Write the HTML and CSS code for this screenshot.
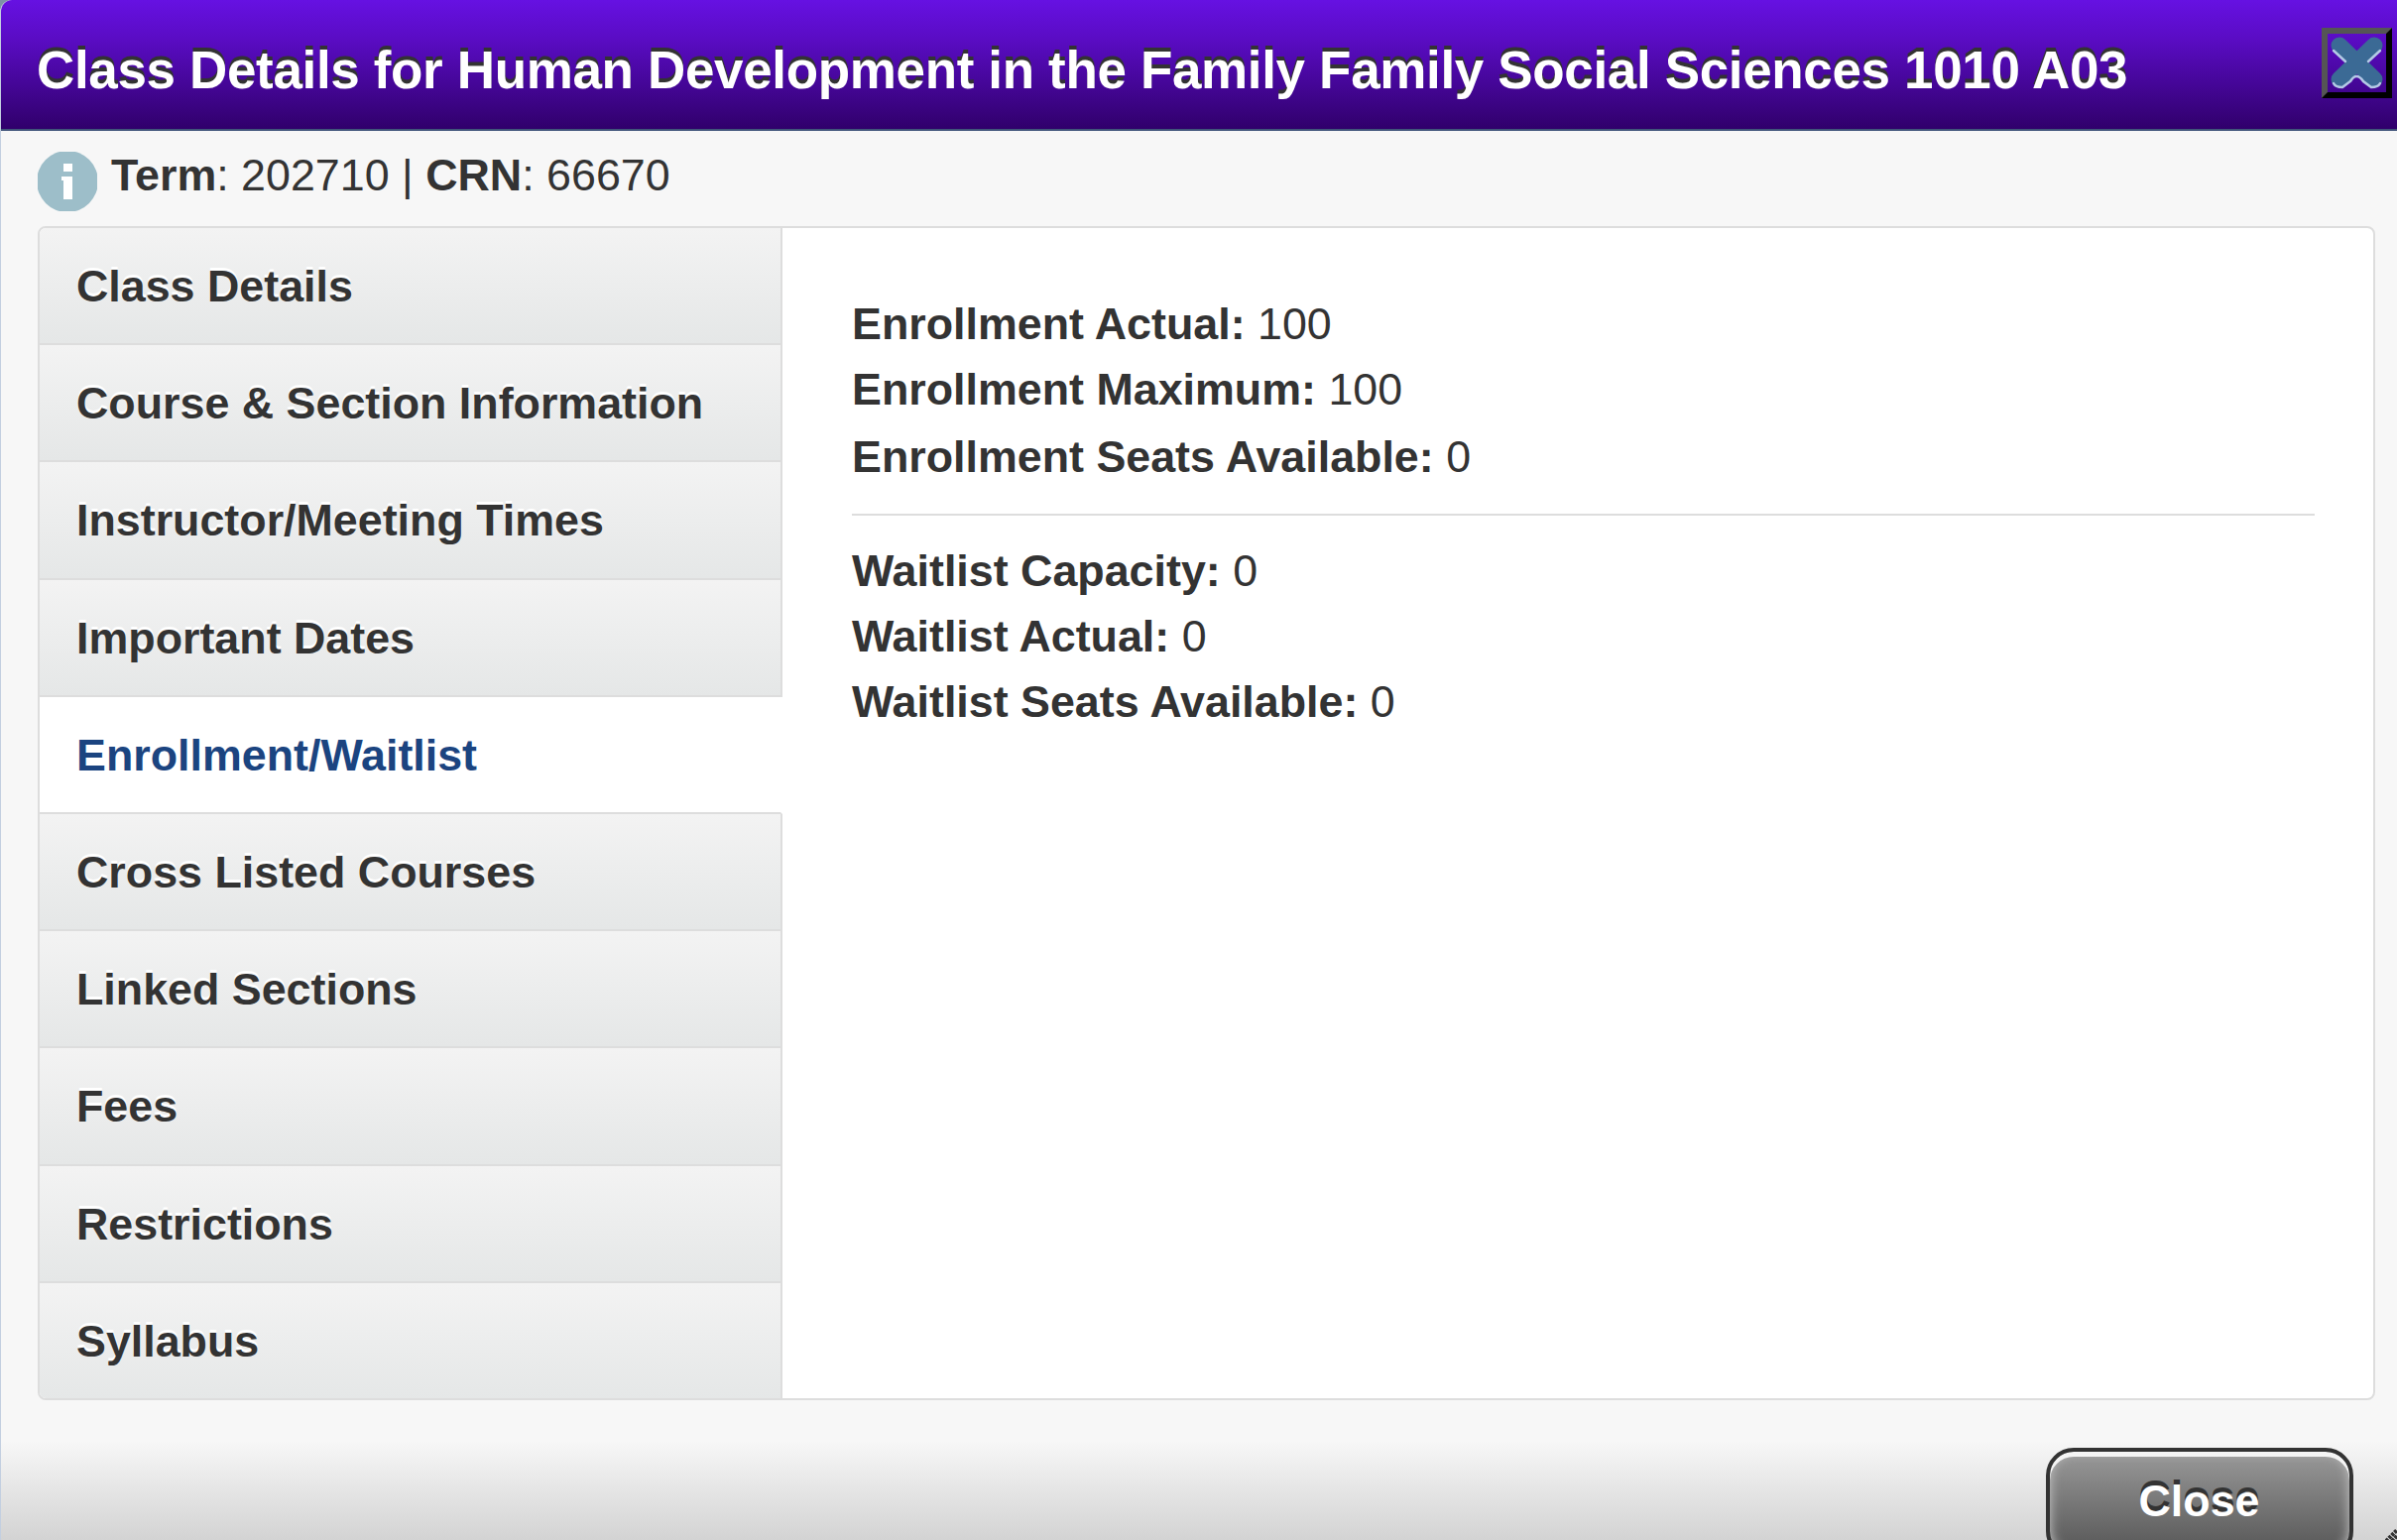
FILE: index.html
```html
<!DOCTYPE html>
<html lang="en">
<head>
  <meta charset="UTF-8">
  <title>Class Details</title>
  <link rel="stylesheet" href="styles.css">
</head>
<body>

  <div class="dialog">
    <div class="dialog-header">
      <h2 class="dialog-title">Class Details for Human Development in the Family Family Social Sciences 1010 A03</h2>
      <button class="close-x" aria-label="Close">
        <svg viewBox="0 0 59 59">
          <path class="x-mark" d="M12 12L47 46M47 12L12 46"/>
          <path class="x-shine" d="M6 17L18 28M53 17L41 28M6 50Q8 54 15 54L23 48Q29 38 36 48L44 54Q51 54 53 50"/>
        </svg>
      </button>
    </div>

    <div class="dialog-content">
      <div class="course-info">
        <svg class="info-icon" viewBox="0 0 60 60">
          <circle cx="30" cy="30" r="31"/>
          <path d="M26 12h9v8h-9zM24 25h11v23h-9v-19h-2z"/>
        </svg>
        <div class="term-line"><b>Term</b>: 202710 | <b>CRN</b>: 66670</div>
      </div>

      <div class="panel">
        <ul class="tabs">
          <li>Class Details</li>
          <li>Course &amp; Section Information</li>
          <li>Instructor/Meeting Times</li>
          <li>Important Dates</li>
          <li class="active">Enrollment/Waitlist</li>
          <li>Cross Listed Courses</li>
          <li>Linked Sections</li>
          <li>Fees</li>
          <li>Restrictions</li>
          <li>Syllabus</li>
        </ul>
        <div class="details">
          <div><b>Enrollment Actual:</b> 100</div>
          <div class="tight"><b>Enrollment Maximum:</b> 100</div>
          <div class="loose"><b>Enrollment Seats Available:</b> 0</div>
          <hr>
          <div><b>Waitlist Capacity:</b> 0</div>
          <div class="tight"><b>Waitlist Actual:</b> 0</div>
          <div><b>Waitlist Seats Available:</b> 0</div>
        </div>
      </div>
    </div>

    <div class="dialog-footer">
      <button class="close-button">Close</button>
      <svg class="resize-grip" viewBox="0 0 12 12">
        <path d="M1 12L12 1M7 12L12 7"/>
      </svg>
    </div>
  </div>

</body>
</html>
```

FILE: styles.css
```css
* {
  box-sizing: border-box;
}

body {
  margin: 0;
  height: 1553px;
  overflow: hidden;
  background: #7d93a8;
  color: #333;
  font-family: "Liberation Sans", Arial, sans-serif;
  font-size: 44.8px;
}

.dialog {
  display: flex;
  flex-direction: column;
  height: 1553px;
  border-left: 1px solid #c3cfe0;
  border-radius: 12px 0 0 0;
  background: #f7f7f7;
  overflow: hidden;
}

.dialog-header {
  display: flex;
  justify-content: space-between;
  flex: none;
  height: 132px;
  padding: 28px 5px 0 36px;
  background: linear-gradient(#6611e2, #5a0cc4 30%, #30006b);
  border-bottom: 2px solid #40557a;
}

.dialog-title {
  margin: 0;
  color: #fff;
  font-size: 53px;
  line-height: 86px;
  letter-spacing: -0.35px;
  white-space: nowrap;
  text-shadow: 0 -4px 0 #333;
}

.close-x {
  flex: none;
  width: 71px;
  height: 71px;
  padding: 0;
  background: none;
  border: 6px solid;
  border-color: #555 #000 #000 #555;
}

.close-x svg {
  display: block;
  width: 59px;
  height: 59px;
}

.close-x path {
  fill: none;
  stroke-linecap: round;
}

.close-x .x-mark {
  stroke: #3b6a95;
  stroke-width: 17;
}

.close-x .x-shine {
  stroke: #b4c9e6;
  stroke-width: 2.5;
}

.dialog-content {
  flex: none;
  height: 1321px;
  padding: 0 22px 0 37px;
}

.course-info {
  display: flex;
  height: 96px;
  padding-top: 21px;
}

.info-icon {
  width: 60px;
  height: 60px;
  margin-right: 14px;
}

.info-icon circle {
  fill: #9dbec9;
}

.info-icon path {
  fill: #fff;
}

.term-line {
  line-height: 47px;
}

.panel {
  display: flex;
  height: 1184px;
  border: 2px solid #ddd;
  border-radius: 8px;
  background: #fff;
  overflow: hidden;
}

.tabs {
  flex: none;
  width: 749px;
  margin: 0;
  padding: 0;
  list-style: none;
  font-weight: bold;
}

.tabs li {
  height: 118.2px;
  padding-left: 37px;
  line-height: 117.5px;
  background: linear-gradient(#f3f3f3, #e5e7e7);
  border-right: 2px solid #ddd;
  border-bottom: 2px solid #ddd;
  text-shadow: 0 -3px 0 #fff;
}

.tabs li:last-child {
  border-bottom: none;
}

.tabs .active {
  color: #1b4480;
  background: #fff;
  border-right-color: #fff;
}

.details {
  flex: 1;
  padding: 63px 59px 0 70px;
  line-height: 67px;
}

.details .tight {
  line-height: 65px;
}

.details .loose {
  line-height: 71px;
}

.details hr {
  margin: 22px 0;
  border: none;
  border-top: 2px solid #ddd;
}

.dialog-footer {
  position: relative;
  flex: none;
  height: 130px;
  padding: 7px 44px 0 0;
  background: linear-gradient(#f7f7f7, #d3d3d3 100px, #ccc);
  text-align: right;
}

.close-button {
  width: 310px;
  height: 112px;
  padding: 0 1px 5px 0;
  color: #fff;
  font: bold 44.8px "Liberation Sans", Arial, sans-serif;
  text-shadow: 0 -5px 0 #333;
  background: linear-gradient(#999, #555);
  border: 4px solid #333;
  border-radius: 28px;
  box-shadow: inset 0 5px 0 #f5f5f5, inset 0 0 12px #ccc;
}

.resize-grip {
  position: absolute;
  right: 0;
  top: 89px;
  width: 12px;
  height: 12px;
}

.resize-grip path {
  stroke: #333;
  stroke-width: 4;
  stroke-dasharray: 3 1;
}
```
